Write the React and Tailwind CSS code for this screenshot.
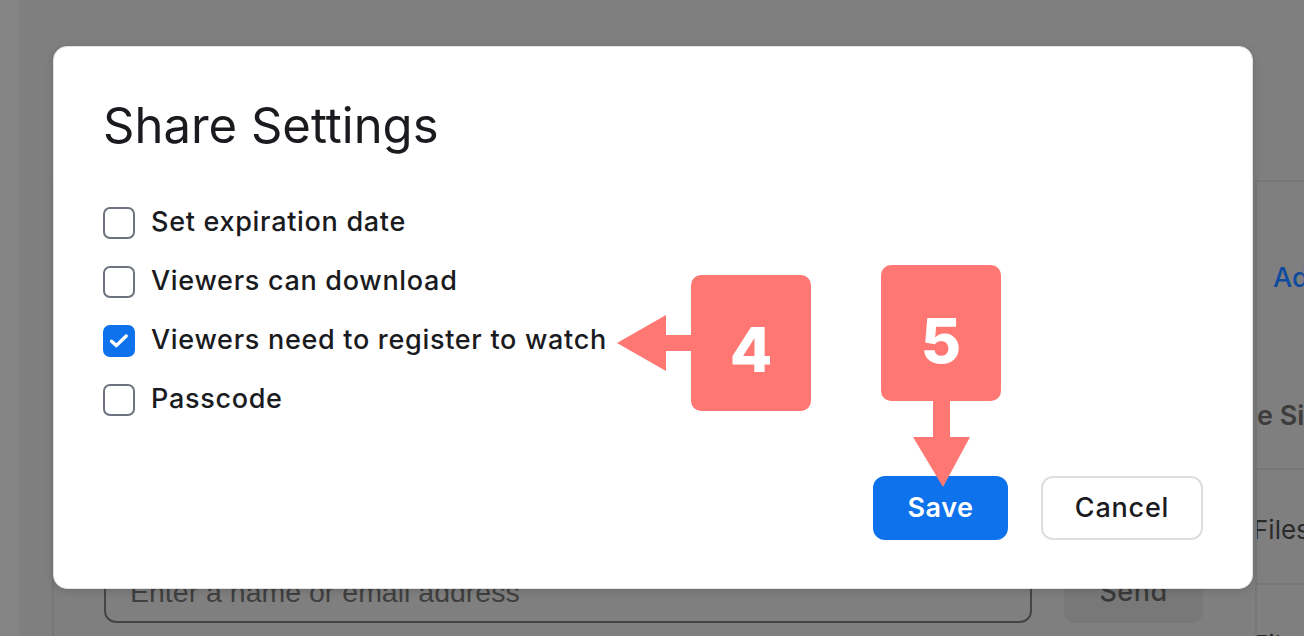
import React from "react";

const rows = [
  { label: "Set expiration date", checked: false },
  { label: "Viewers can download", checked: false },
  { label: "Viewers need to register to watch", checked: true },
  { label: "Passcode", checked: false },
];

function Box({ checked }) {
  if (checked) {
    return (
      <div className="w-[32px] h-[32px] rounded-[7px] bg-[#0e72ed] flex items-center justify-center shrink-0">
        <svg width="20" height="16" viewBox="0 0 20 16" fill="none">
          <path d="M2.5 8.2 L7.3 12.6 L17.2 3" stroke="white" strokeWidth="3.4" strokeLinecap="round" strokeLinejoin="round" />
        </svg>
      </div>
    );
  }
  return <div className="w-[32px] h-[32px] rounded-[7px] border-2 border-[#6e7380] bg-white shrink-0" />;
}

export default function App() {
  return (
    <div className="relative w-[1304px] h-[636px] overflow-hidden bg-[#7f7f7f] flex" style={{ fontFamily: "Inter, 'Noto Sans', sans-serif" }}>
      {/* background page */}
      <div className="w-[19px] h-full bg-[#848484]" />
      <div className="w-[33px] h-full" />
      <div className="flex-1 flex flex-col">
        <div className="h-[180px]" />
        <div className="flex-1 flex">
          <div className="flex-1 border-l-2 border-[#777777] flex flex-col justify-end pb-[13px] pl-[50px] pr-[52px]">
            <div className="flex items-end gap-[32px]">
              <div className="flex-1 h-[62px] rounded-[12px] border-2 border-[#454545] flex items-center pl-[24px]">
                <span className="text-[28.5px] text-[#3f3f3f]" style={{ fontFamily: "'Liberation Sans', Arial, sans-serif" }}>Enter a name or email address</span>
              </div>
              <div className="w-[139px] h-[62px] rounded-[12px] bg-[#787878] flex items-center justify-center">
                <span className="text-[27px] font-medium tracking-[0.5px] text-[#3a3a3a]">Send</span>
              </div>
            </div>
          </div>
          <div className="w-[49px] border-l-2 border-t-2 border-[#777777] flex flex-col overflow-hidden">
            <div className="h-[288px] border-b-2 border-[#777777] relative">
              <span className="absolute left-[16px] top-[76px] text-[27px] font-medium text-[#0d4b9f] whitespace-nowrap">Add</span>
              <span className="absolute left-[0px] top-[214px] text-[27px] font-semibold text-[#3d3d3d] whitespace-nowrap">e Size</span>
            </div>
            <div className="h-[115px] border-b-2 border-[#777777] relative">
              <span className="absolute left-[-4px] top-[40px] text-[26px] text-[#2b2b2b] whitespace-nowrap">Files</span>
            </div>
            <div className="flex-1 relative">
              <span className="absolute left-[-4px] top-[40px] text-[26px] text-[#2b2b2b] whitespace-nowrap">Files</span>
            </div>
          </div>
        </div>
      </div>

      {/* modal */}
      <div className="absolute left-[53px] top-[46px] w-[1200px] h-[543px] bg-white rounded-[14px] border border-[#e2e2e2] shadow-[0_2px_8px_rgba(0,0,0,0.15)] flex flex-col px-[49px] pt-[54px] pb-[48px]">
        <h1 className="text-[49px] leading-none font-normal text-[#1a1b1e] tracking-[0px]">Share Settings</h1>
        <div className="mt-[43px] flex flex-col">
          {rows.map((r) => (
            <div key={r.label} className="h-[59px] flex items-center gap-[16px]">
              <Box checked={r.checked} />
              <span className="text-[27px] font-medium tracking-[0.7px] text-[#1a1b1e]">{r.label}</span>
            </div>
          ))}
        </div>
        <div className="mt-auto flex justify-end gap-[33px]">
          <div className="w-[135px] h-[64px] rounded-[12px] bg-[#0e72ed] flex items-center justify-center">
            <span className="text-[27px] font-semibold tracking-[0.5px] text-white">Save</span>
          </div>
          <div className="w-[162px] h-[64px] rounded-[12px] border-2 border-[#dedede] bg-white flex items-center justify-center">
            <span className="text-[27px] font-medium tracking-[0.8px] text-[#1a1b1e]">Cancel</span>
          </div>
        </div>
      </div>

      {/* annotations */}
      <svg className="absolute left-[617px] top-[315px]" width="76" height="57" viewBox="0 0 76 57">
        <rect x="48" y="20" width="28" height="16" fill="#ff7772" />
        <polygon points="0,28 49,0 49,56" fill="#ff7772" />
      </svg>
      <div className="absolute left-[691px] top-[275px] w-[120px] h-[136px] rounded-[10px] bg-[#ff7772] flex items-center justify-center">
        <span className="text-[62px] leading-none font-extrabold text-white mt-[14px]">4</span>
      </div>

      <svg className="absolute left-[913px] top-[399px]" width="58" height="89" viewBox="0 0 58 89">
        <rect x="20" y="0" width="17" height="40" fill="#ff7772" />
        <polygon points="0,38 57,38 30,88" fill="#ff7772" />
      </svg>
      <div className="absolute left-[881px] top-[265px] w-[120px] h-[136px] rounded-[10px] bg-[#ff7772] flex items-center justify-center">
        <span className="text-[62px] leading-none font-extrabold text-white mt-[16px]">5</span>
      </div>
    </div>
  );
}
